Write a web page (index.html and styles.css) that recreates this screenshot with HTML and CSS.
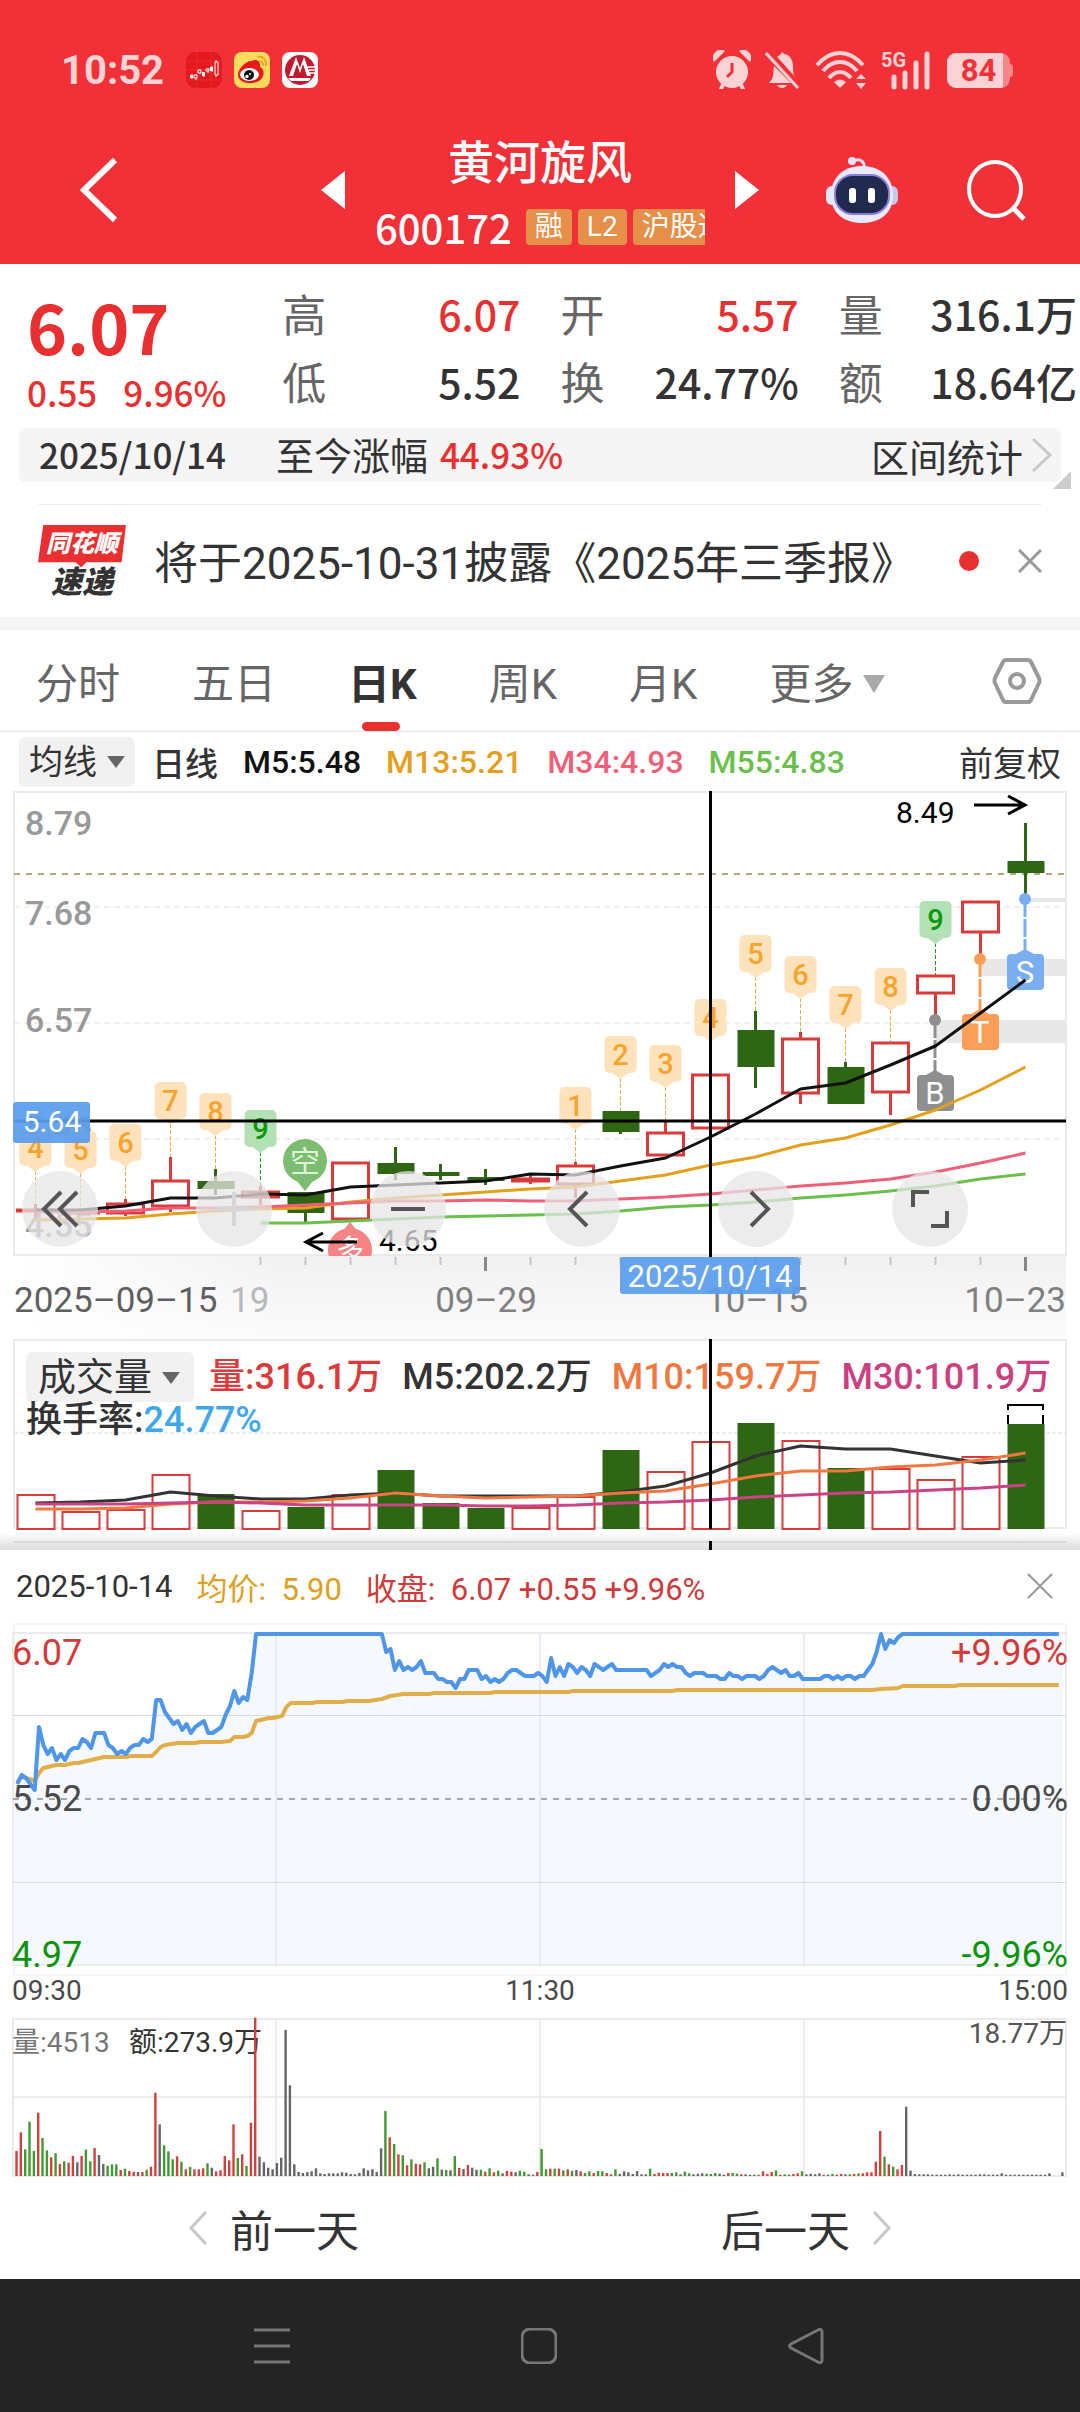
FILE: index.html
```html
<!DOCTYPE html>
<html lang="zh-CN">
<head>
  <meta charset="UTF-8">
  <meta name="viewport" content="width=device-width, initial-scale=1.0">
  <title>黄河旋风 600172</title>
  <link rel="stylesheet" href="styles.css">
</head>
<body>
  <header class="main-header">
    <div class="status-bar">
      <span class="clock">10:52</span>
      <span class="app-icons">
        <svg width="36" height="36" viewBox="0 0 36 36">
          <rect width="36" height="36" rx="9" fill="#e5191d"/>
          <path d="M11 0V36M25 0V36M0 9H36M0 18H36M0 28H36" stroke="#ea2c30" stroke-width="1"/>
          <path d="M6 22v5M10 22v6M14 17v5M18 20v5M22 16v5M26 14v6M30 8v17" stroke="#fff" stroke-width="1"/>
          <path d="M4 23h3v3H4zM16 20h3v4h-3zM24 15h3v4h-3z" fill="#fff"/>
          <path d="M8 23h3v3H8zM12 18h3v3h-3zM20 17h3v2h-3zM29 10h3v13h-3z" fill="#e5191d" stroke="#fff"/>
        </svg>
        <svg width="36" height="36" viewBox="0 0 36 36">
          <rect width="36" height="36" rx="8" fill="#fddb5c"/>
          <path d="M4 23c0-7 9-15 14-14 3-2 9-1 8 6 5 2 5 10-1 14-9 5-21 1-21-6z" fill="#e3191c"/>
          <ellipse cx="15.500" cy="22.500" rx="9.500" ry="6.500" fill="#fff"/>
          <circle cx="15" cy="23" r="5" fill="#111"/>
          <circle cx="13" cy="24.500" r="1.700" fill="#fff"/><circle cx="16" cy="22" r="1" fill="#fff"/>
          <path d="M24 5c5-1 9 3 8 9M25 9c3 0 4 2 4 5" fill="none" stroke="#f3a12c" stroke-width="2"/>
        </svg>
        <svg width="36" height="36" viewBox="0 0 36 36">
          <rect width="36" height="36" rx="8" fill="#fff"/>
          <circle cx="18" cy="18" r="15" fill="#c4182f"/>
          <path d="M7 24L14 5l4 11 4-11 7 19h-4l-4-12-3 9-3-9-4 12zM6 26h23l-2 3H9z" fill="#fff"/>
          <path d="M26 15h10M27 18h9M28 21h8" stroke="#fff" stroke-width="1.500"/>
        </svg>
      </span>
      <span class="system-icons">
        <svg width="38" height="40" viewBox="0 0 38 40">
          <circle cx="19" cy="22" r="16" fill="#fcd3d5"/>
          <path d="M1 12A8 8 0 0 1 12 1zM37 12A8 8 0 0 0 26 1zM8 34l-2 5h4l2-4zM30 34l2 5h-4l-2-4z" fill="#fcd3d5"/>
          <path d="M19 13v9l-5 5" fill="none" stroke="#f23038" stroke-width="3"/>
        </svg>
        <svg width="36" height="38" viewBox="0 0 36 38">
          <path d="M4 32c5-5 4-10 5-17L26 32zM12 6c2-2 3-2 4-3l1-2 2 2c7 1 9 7 9 13 0 7 1 9 4 13zM12 34h10c-2 4-8 4-10 0z" fill="#fcd3d5"/>
          <path d="M4 1L36 36" stroke="#f23038" stroke-width="5"/>
          <path d="M1 2L33 37" stroke="#fcd3d5" stroke-width="3"/>
        </svg>
        <svg width="52" height="40" viewBox="0 0 52 40">
          <g fill="none" stroke="#fcd3d5" stroke-width="4">
            <path d="M2 15C16-1 34-1 48 15M8 21C18 9 32 9 42 21M14 28C21 20 29 20 36 28"/>
          </g>
          <path d="M19 32q6-5 12 0l-6 6zM41 29l5-5 5 5zM41 33h10l-5 6z" fill="#fcd3d5"/>
        </svg>
        <span class="signal">
          <span class="net">5G</span>
          <svg width="50" height="40" viewBox="0 0 50 40">
            <path d="M13 37V27M24 37V23M35 37V13M46 37V4" stroke="#fcd3d5" stroke-width="5" stroke-linecap="round"/>
          </svg>
        </span>
        <span class="battery">84</span>
      </span>
    </div>
    <div class="title-bar">
      <button class="icon-btn back-btn" aria-label="返回">
        <svg width="38" height="66" viewBox="0 0 38 66"><path d="M35 3L4 33l31 30" fill="none" stroke="#fff" stroke-width="6"/></svg>
      </button>
      <div class="stock-switch">
        <button class="icon-btn" aria-label="上一只">
          <svg width="24" height="38" viewBox="0 0 24 38"><path d="M24 0v38L0 19z" fill="#fff"/></svg>
        </button>
        <div class="stock-name">
          <h1>黄河旋风</h1>
          <div class="stock-tags">
            <span class="stock-code">600172</span>
            <span class="tag">融</span>
            <span class="tag">L2</span>
            <span class="tag">沪股通</span>
          </div>
        </div>
        <button class="icon-btn" aria-label="下一只">
          <svg width="24" height="38" viewBox="0 0 24 38"><path d="M0 0v38l24-19z" fill="#fff"/></svg>
        </button>
      </div>
      <button class="icon-btn robot-btn" aria-label="智能助手">
        <svg width="72" height="68" viewBox="0 0 72 68">
          <path d="M27 5c8-4 12 2 11 7" fill="none" stroke="#e5e2f7" stroke-width="3"/>
          <circle cx="26" cy="5" r="4" fill="#e6e6fa"/>
          <rect x="0" y="30" width="12" height="19" rx="6" fill="#e4e6fa"/>
          <rect x="60" y="30" width="12" height="19" rx="6" fill="#c8c5ee"/>
          <path d="M36 10c22 0 31 15 31 29 0 19-14 28-31 28S5 58 5 39c0-14 9-29 31-29z" fill="#e9ebfc"/>
          <rect x="9" y="19" width="54" height="39" rx="18" fill="#202a4c" stroke="#8d7be0" stroke-width="2"/>
          <rect x="23" y="32" width="7" height="15" rx="3" fill="#fff"/>
          <rect x="42" y="32" width="7" height="15" rx="3" fill="#fff"/>
        </svg>
      </button>
      <button class="icon-btn" aria-label="搜索">
        <svg width="60" height="62" viewBox="0 0 60 62"><ellipse cx="29" cy="30" rx="26" ry="27" fill="none" stroke="#fff" stroke-width="4"/><path d="M46 48l12 12" stroke="#fff" stroke-width="5"/></svg>
      </button>
    </div>
  </header>

  <main>
    <section class="quote">
      <div class="price-block">
        <div class="price">6.07</div>
        <div class="change"><span>0.55</span><span>9.96%</span></div>
      </div>
      <dl>
        <div><dt>高</dt><dd class="up">6.07</dd></div>
        <div><dt>低</dt><dd>5.52</dd></div>
      </dl>
      <dl>
        <div><dt>开</dt><dd class="up">5.57</dd></div>
        <div><dt>换</dt><dd>24.77%</dd></div>
      </dl>
      <dl>
        <div><dt>量</dt><dd>316.1万</dd></div>
        <div><dt>额</dt><dd>18.64亿</dd></div>
      </dl>
    </section>

    <div class="range-bar">
      <span class="range-date">2025/10/14</span>
      <span class="range-label">至今涨幅</span>
      <span class="range-value up">44.93%</span>
      <a href="#" class="range-link">区间统计
        <svg width="22" height="36" viewBox="0 0 22 36"><path d="M2 2l17 16L2 34" fill="none" stroke="#c8c8c8" stroke-width="3"/></svg>
      </a>
    </div>

    <section class="news">
      <span class="news-logo">
        <span class="logo-top">同花顺</span>
        <span class="logo-bottom">速递</span>
      </span>
      <a href="#" class="news-text">将于2025-10-31披露《2025年三季报》</a>
      <span class="dot"></span>
      <button class="icon-btn" aria-label="关闭公告">
        <svg width="24" height="24" viewBox="0 0 24 24"><path d="M1 1l22 22M23 1L1 23" stroke="#999" stroke-width="3"/></svg>
      </button>
    </section>

    <nav class="tabs">
      <button>分时</button>
      <button>五日</button>
      <button class="active">日K</button>
      <button>周K</button>
      <button>月K</button>
      <button class="more">更多<i class="caret"></i></button>
      <button class="icon-btn settings" aria-label="设置">
        <svg width="50" height="46" viewBox="0 0 50 46"><path d="M14 2h22q2 0 3 2l8 16q1 3 0 5l-8 17q-1 2-3 2H14q-2 0-3-2L3 25q-1-2 0-5l8-16q1-2 3-2z" fill="none" stroke="#999" stroke-width="4"/><circle cx="25" cy="23" r="7" fill="none" stroke="#999" stroke-width="4"/></svg>
      </button>
    </nav>

    <div class="ma-row">
      <button class="pill">均线<i class="caret dark"></i></button>
      <span class="period">日线</span>
      <span class="ma5">M5:5.48</span>
      <span class="ma13">M13:5.21</span>
      <span class="ma34">M34:4.93</span>
      <span class="ma55">M55:4.83</span>
      <button class="adjust">前复权</button>
    </div>

    <section class="chart">
      <svg id="kChart" viewBox="0 791 1080 548"></svg>
      <div class="chart-tools">
        <button aria-label="最左"><svg width="38" height="38" viewBox="0 0 38 38"><path d="M20 2L3 19l17 17M36 2L19 19l17 17"/></svg></button>
        <button aria-label="放大" disabled><svg width="38" height="38" viewBox="0 0 38 38"><path d="M19 2v34M2 19h34"/></svg></button>
        <button aria-label="缩小"><svg width="38" height="38" viewBox="0 0 38 38"><path d="M2 19h34"/></svg></button>
        <button aria-label="左移"><svg width="38" height="38" viewBox="0 0 38 38"><path d="M24 2L7 19l17 17"/></svg></button>
        <button aria-label="右移"><svg width="38" height="38" viewBox="0 0 38 38"><path d="M14 2l17 17-17 17"/></svg></button>
        <button aria-label="全屏"><svg width="38" height="38" viewBox="0 0 38 38"><path d="M18 2H2v15M36 21v15H20"/></svg></button>
      </div>
    </section>

    <section class="chart volume">
      <svg id="volChart" viewBox="0 1339 1080 211"></svg>
      <div class="vol-legend">
        <div class="vol-row">
          <button class="pill">成交量<i class="caret dark"></i></button>
          <span class="vol">量:316.1万</span>
          <span>M5:202.2万</span>
          <span class="m10">M10:159.7万</span>
          <span class="m30">M30:101.9万</span>
        </div>
        <div class="turnover">换手率:<span>24.77%</span></div>
      </div>
    </section>

    <section class="day-panel">
      <div class="panel-head">
        <span>2025-10-14</span>
        <span class="avg">均价:&nbsp; 5.90</span>
        <span class="close-price">收盘:&nbsp; 6.07 +0.55 +9.96%</span>
        <button class="icon-btn" aria-label="关闭">
          <svg width="28" height="28" viewBox="0 0 28 28"><path d="M2 2l24 24M26 2L2 26" stroke="#999" stroke-width="2"/></svg>
        </button>
      </div>
      <svg id="minuteChart" viewBox="0 1622 1080 390"></svg>
      <svg id="minuteVol" viewBox="0 2012 1080 168"></svg>
      <div class="day-nav">
        <button><svg width="20" height="36" viewBox="0 0 20 36"><path d="M18 2L3 18l15 16" fill="none" stroke="#c8c8c8" stroke-width="3"/></svg>前一天</button>
        <button>后一天<svg width="20" height="36" viewBox="0 0 20 36"><path d="M2 2l15 16L2 34" fill="none" stroke="#c8c8c8" stroke-width="3"/></svg></button>
      </div>
    </section>
  </main>

  <footer class="system-nav">
    <button class="icon-btn" aria-label="任务"><svg width="36" height="36" viewBox="0 0 36 36"><path d="M0 2h36M0 18h36M0 34h36"/></svg></button>
    <button class="icon-btn" aria-label="主页"><svg width="36" height="36" viewBox="0 0 36 36"><rect x="1" y="1" width="34" height="34" rx="8"/></svg></button>
    <button class="icon-btn" aria-label="返回"><svg width="36" height="36" viewBox="0 0 36 36"><path d="M30 2Q34 0 34 4V32Q34 36 30 34L3 20Q0 18 3 16z"/></svg></button>
  </footer>

  <script src="charts.js"></script>
</body>
</html>
```
FILE: styles.css
```css
/* ===== Base Styles ===== */
:root {
  --red: #e93030;
  --header: #f23038;
  --text: #333333;
  --muted: #666666;
  --light: #f5f5f5;
  --sans: Roboto, "Noto Sans CJK SC", sans-serif;
  --digits: "Noto Sans CJK SC", Roboto, sans-serif;
}

* {
  margin: 0;
  padding: 0;
  box-sizing: border-box;
}

body {
  background: #fff;
  color: var(--text);
  font-family: var(--sans);
  overflow-x: hidden;
}

button {
  border: none;
  background: none;
  color: inherit;
  font: inherit;
  cursor: pointer;
}

a {
  color: inherit;
  text-decoration: none;
}

svg {
  display: block;
}

.icon-btn {
  display: flex;
}

.up {
  color: var(--red);
}

.caret {
  display: inline-block;
  border: 11px solid transparent;
  border-top: 18px solid #aaa;
  border-bottom: none;
}

.caret.dark {
  border-width: 12px 9px 0;
  border-top-color: #666;
}

/* ===== Header ===== */
.main-header {
  background: var(--header);
  color: #fff;
  height: 264px;
}

.status-bar {
  display: flex;
  align-items: center;
  height: 140px;
  padding: 0 70px 0 61px;
  color: #fcd3d5;
}

.clock {
  font-size: 40px;
  font-weight: 700;
}

.app-icons {
  display: flex;
  gap: 12px;
  margin-left: 22px;
}

.system-icons {
  display: flex;
  align-items: center;
  gap: 14px;
  margin-left: auto;
}

.signal {
  position: relative;
  margin-right: 2px;
}

.net {
  position: absolute;
  top: 0;
  left: 0;
  font-size: 20px;
  font-weight: 700;
  line-height: 20px;
}

.battery {
  position: relative;
  width: 63px;
  border-radius: 9px;
  background: linear-gradient(to right, #fcd3d5 56px, #f7868b 56px);
  color: var(--header);
  font-size: 31px;
  font-weight: 700;
  line-height: 35px;
  text-align: center;
}

.battery::after {
  content: "";
  position: absolute;
  top: 11px;
  right: -3px;
  width: 3px;
  height: 13px;
  border-radius: 0 3px 3px 0;
  background: #f7868b;
}

.title-bar {
  display: flex;
  align-items: center;
  padding: 0 54px 0 80px;
  height: 100px;
}

.stock-switch {
  display: flex;
  align-items: center;
  margin-left: 203px;
  gap: 30px;
}

.stock-name {
  width: 330px;
}

.stock-name h1 {
  margin-bottom: 18px;
  font-size: 46px;
  font-weight: 500;
  line-height: 56px;
  text-align: center;
}

.stock-tags {
  display: flex;
  align-items: center;
  gap: 6px;
  overflow: hidden;
  line-height: 36px;
}

.stock-code {
  font-family: var(--digits);
  font-size: 40px;
  font-weight: 500;
  margin-right: 8px;
}

.tag {
  flex: none;
  padding: 0 9px;
  border-radius: 4px;
  background: #e58f48;
  font-size: 28px;
}

.robot-btn {
  margin-left: auto;
  margin-right: 68px;
}

/* ===== Quote ===== */
.quote {
  display: grid;
  grid-template-columns: 215fr 238fr 238fr 238fr;
  gap: 40px;
  padding: 15px 3px 13px 27px;
  font-family: var(--digits);
}

.price {
  color: var(--red);
  font-size: 68px;
  font-weight: 700;
  line-height: 94px;
}

.change {
  display: flex;
  gap: 26px;
  color: var(--red);
  font-size: 35px;
  font-weight: 500;
  line-height: 38px;
}

.quote dl div {
  display: flex;
  justify-content: space-between;
  line-height: 68px;
}

.quote dt {
  color: var(--muted);
  font-size: 44px;
}

.quote dd {
  font-size: 41px;
  font-weight: 500;
  white-space: nowrap;
}

/* ===== Range bar ===== */
.range-bar {
  position: relative;
  display: flex;
  align-items: center;
  margin: 0 19px;
  padding: 0 8px 0 20px;
  height: 54px;
  border-radius: 6px;
  background: var(--light);
  font-size: 38px;
}

.range-bar::after {
  content: "";
  position: absolute;
  right: -10px;
  bottom: -7px;
  border-left: 18px solid transparent;
  border-bottom: 18px solid #ccc;
}

.range-date,
.range-value {
  padding-bottom: 4px;
  font-family: var(--digits);
  font-size: 35px;
  font-weight: 500;
}

.range-label {
  margin: 0 12px 0 50px;
  padding-bottom: 4px;
}

.range-link {
  display: flex;
  align-items: center;
  gap: 8px;
  margin-left: auto;
}

/* ===== News ===== */
.news {
  display: flex;
  align-items: center;
  margin: 22px 38px 0;
  height: 113px;
  border-top: 1px solid #eee;
}

.news-logo {
  display: flex;
  flex-direction: column;
  align-items: center;
  width: 88px;
  margin-right: 28px;
  font-style: italic;
  font-weight: 900;
}

.logo-top {
  width: 88px;
  padding-bottom: 5px;
  background: var(--red);
  clip-path: polygon(6% 0, 100% 0, 95% 88%, 55% 88%, 49% 100%, 43% 88%, 0 88%);
  color: #fff;
  font-size: 24px;
  line-height: 38px;
  text-align: center;
}

.logo-bottom {
  font-size: 31px;
  line-height: 30px;
}

.news-text {
  padding-bottom: 3px;
  font-size: 44px;
  white-space: nowrap;
}

.dot {
  width: 20px;
  height: 20px;
  margin: 0 39px 0 auto;
  border-radius: 50%;
  background: var(--red);
}

/* ===== Tabs ===== */
.tabs {
  display: flex;
  align-items: center;
  gap: 72px;
  height: 115px;
  padding: 0 38px 0 36px;
  border-top: 13px solid #f4f4f4;
  border-bottom: 1px solid #e6e6e6;
  color: var(--muted);
  font-size: 42px;
}

.tabs button {
  height: 100%;
  align-items: center;
}

.tabs .active {
  position: relative;
  color: var(--text);
  font-weight: 700;
}

.tabs .active::after {
  content: "";
  position: absolute;
  left: 14px;
  bottom: 0;
  width: 38px;
  height: 9px;
  border-radius: 5px;
  background: var(--red);
}

.more .caret {
  margin-left: 10px;
  vertical-align: 6px;
}

.tabs .settings {
  margin-left: auto;
}

/* ===== Moving averages ===== */
.ma-row {
  display: flex;
  align-items: center;
  gap: 25px;
  height: 59px;
  padding: 0 19px;
  font-size: 32px;
  font-weight: 500;
  white-space: nowrap;
}

.pill {
  padding: 0 10px;
  border-radius: 6px;
  background: #f1f1f1;
  font-weight: 400;
  line-height: 50px;
}

.pill .caret {
  margin-left: 10px;
  vertical-align: 6px;
}

.ma-row .pill {
  margin-right: -8px;
  font-size: 34px;
}

.period {
  font-size: 33px;
}

.ma5 {
  color: #111;
}

.ma13 {
  color: #e2a01c;
}

.ma34 {
  color: #ef6078;
}

.ma55 {
  color: #6bbf4c;
}

.adjust {
  margin-left: auto;
  font-size: 34px;
  font-weight: 400;
}

/* ===== Charts ===== */
.chart {
  position: relative;
}

.chart svg text,
.day-panel svg text {
  font-family: var(--sans);
}

.chart > svg,
.day-panel > svg {
  width: 100%;
  height: auto;
}

.chart-tools {
  position: absolute;
  top: 380px;
  left: 22px;
  display: flex;
  gap: 98px;
}

.chart-tools button {
  display: flex;
  align-items: center;
  justify-content: center;
  width: 76px;
  height: 76px;
  border-radius: 50%;
  background: rgba(230, 230, 230, 0.75);
}

.chart-tools path {
  fill: none;
  stroke: #555;
  stroke-width: 4;
}

.chart-tools button:disabled path {
  stroke: #d6d6d6;
}

.vol-legend {
  position: absolute;
  top: 13px;
  left: 26px;
  right: 14px;
  font-size: 36px;
  font-weight: 500;
  white-space: nowrap;
}

.vol-row {
  display: flex;
  gap: 20px;
  line-height: 50px;
}

.vol-legend .pill {
  padding: 0 14px 0 12px;
  margin-right: -5px;
  font-size: 38px;
}

.vol {
  color: #dc3a3a;
}

.m10 {
  color: #f07840;
}

.m30 {
  color: #cc4080;
}

.turnover {
  line-height: 36px;
}

.turnover span {
  color: #40a8ea;
}

/* ===== Day panel ===== */
.panel-head {
  display: flex;
  align-items: center;
  gap: 24px;
  height: 72px;
  padding: 0 26px 0 16px;
  font-size: 31px;
  white-space: nowrap;
}

.avg {
  color: #dda020;
}

.close-price {
  color: #d03a3a;
}

.panel-head .icon-btn {
  margin-left: auto;
}

.day-nav {
  display: flex;
  justify-content: space-between;
  height: 99px;
  padding: 0 188px 3px;
  font-size: 43px;
}

.day-nav button {
  display: flex;
  align-items: center;
  gap: 22px;
}

/* ===== System navigation ===== */
.system-nav {
  display: flex;
  justify-content: space-between;
  align-items: center;
  height: 133px;
  padding: 0 256px 0 254px;
  background: #242424;
}

.system-nav svg {
  fill: none;
  stroke: #777;
  stroke-width: 3;
}
```
FILE: charts.js
```js
const RED = "#d93a3a";
const GREEN = "#2f6614";
const x = i => 35.5 + 45 * i;

// [body top, body bottom, wick top, wick bottom, rising]
const candles = [
  [1209, 1211, 1204, 1217, 1], [1210, 1214, 1208, 1215, 1], [1203, 1214, 1199, 1216, 1],
  [1180, 1207, 1157, 1212, 1], [1181, 1189, 1169, 1195, 0], [1191, 1198, 1186, 1205, 1],
  [1192, 1213, 1192, 1222, 0], [1162, 1220, 1162, 1220, 1], [1163, 1174, 1147, 1180, 0],
  [1172, 1176, 1164, 1180, 0], [1177, 1181, 1169, 1185, 0], [1178, 1182, 1173, 1184, 1],
  [1165, 1185, 1162, 1198, 1], [1111, 1132, 1111, 1134, 0], [1132, 1156, 1122, 1156, 1],
  [1074, 1129, 1074, 1129, 1], [1030, 1067, 1011, 1088, 0], [1038, 1094, 1032, 1104, 1],
  [1067, 1104, 1062, 1104, 0], [1042, 1093, 1042, 1115, 1], [975, 994, 975, 1020, 1],
  [901, 933, 901, 959, 1], [861, 873, 823, 897, 0]
];

// moving averages: [colour, first index, points]
const averages = [
  ["#6bbf4c", 5, [1223, 1223, 1221, 1219, 1217, 1216, 1215, 1214, 1211, 1207, 1205, 1202, 1198, 1195, 1191, 1186, 1179, 1174]],
  ["#e2a01c", 0, [1220, 1219, 1218, 1214, 1211, 1209, 1208, 1202, 1198, 1195, 1192, 1189, 1187, 1181, 1175, 1165, 1157, 1145, 1138, 1125, 1110, 1090, 1067]],
  ["#ef6078", 0, [1212, 1212, 1211, 1208, 1208, 1207, 1205, 1203, 1201, 1201, 1200, 1201, 1201, 1199, 1197, 1194, 1190, 1186, 1183, 1179, 1172, 1163, 1153]],
  ["#111", 0, [1210, 1210, 1206, 1198, 1198, 1194, 1195, 1187, 1185, 1183, 1181, 1174, 1175, 1166, 1158, 1137, 1114, 1089, 1083, 1065, 1046, 1013, 980]]
];

// nine-turn badges: [index, digit, top]
const badges = [
  [0, 4, 1129], [1, 5, 1131], [2, 6, 1124], [3, 7, 1082], [4, 8, 1093], [5, 9, 1110],
  [12, 1, 1087], [13, 2, 1036], [14, 3, 1045], [15, 4, 999], [16, 5, 935], [17, 6, 956],
  [18, 7, 986], [19, 8, 968], [20, 9, 901]
];

function line(x1, y1, x2, y2, color, width, dash) {
  return `<path d="M${x1} ${y1}L${x2} ${y2}" stroke="${color}" stroke-width="${width || 2}"${dash ? ` stroke-dasharray="${dash}"` : ""}/>`;
}

function poly(points, color, width) {
  return `<polyline points="${points.join(" ")}" fill="none" stroke="${color}" stroke-width="${width}" stroke-linejoin="round"/>`;
}

function text(tx, ty, str, size, color, extra) {
  return `<text x="${tx}" y="${ty}" font-size="${size}" fill="${color}" ${extra || ""}>${str}</text>`;
}

function box(bx, by, w, h, fill, extra) {
  return `<rect x="${bx}" y="${by}" width="${w}" height="${h}" fill="${fill}" ${extra || ""}/>`;
}

function drawK() {
  let s = `<defs>
    <linearGradient id="axisBg" x1="0" y1="0" x2="0" y2="1"><stop offset="0" stop-color="#f1f1f1"/><stop offset="1" stop-color="#fbfbfb"/></linearGradient>
    <linearGradient id="axisFade"><stop offset="0" stop-color="#fff"/><stop offset="1" stop-color="#fff" stop-opacity="0"/></linearGradient>
    <clipPath id="kClip"><rect x="14" y="792" width="1052" height="464"/></clipPath></defs>`;
  s += box(14, 1256, 1052, 83, "url(#axisBg)") + box(14, 1256, 280, 83, "url(#axisFade)");
  s += box(14, 792, 1052, 463, "#fff", 'stroke="#eaeaea" stroke-width="2"');
  [907, 1023, 1139].forEach(y => { s += line(14, y, 1066, y, "#e2e2e2", 1, "6 4"); });
  s += line(14, 874, 1066, 874, "#b9a67c", 2, "6 6");
  [["8.79", 835], ["7.68", 925], ["6.57", 1032], ["5.46", 1140], ["4.55", 1237]].forEach(l => {
    s += text(25, l[1], l[0], 34, "#999", 'font-weight="500"');
  });
  s += box(935, 1020, 131, 23, "#e8e8e8") + box(980, 959, 86, 17, "#e8e8e8") + box(1025, 898, 41, 4, "#e8e8e8");

  badges.forEach(([i, n, top]) => {
    const cx = x(i), green = n === 9;
    const c = green ? "#b3e0b4" : "#fee2bb";
    s += line(cx, top + 42, cx, candles[i][2], green ? "#1a9a1a" : "#d8b04c", 1, "4 2");
    s += box(cx - 16, top, 32, 37, c, 'rx="5"') + `<path d="M${cx - 8} ${top + 37}h16l-8 6z" fill="${c}"/>`;
    s += text(cx, top + 29, n, 29, green ? "#0b980b" : "#f8a42c", 'text-anchor="middle" font-weight="500"');
  });

  candles.forEach(([a, b, hi, lo, rise], i) => {
    const cx = x(i), c = rise ? RED : GREEN;
    s += line(cx, hi, cx, lo, c, 3);
    s += rise ? box(cx - 18, a + 1, 36, Math.max(b - a - 2, 1), "#fff", `stroke="${RED}" stroke-width="3"`)
      : box(cx - 18, a, 37, b - a, GREEN);
  });

  // long / short balloons
  s += `<path d="M305 1191l-8-10h16z" fill="#7dbd71"/><circle cx="305" cy="1161" r="22" fill="#7dbd71"/>`;
  s += text(305, 1172, "空", 30, "#dff2da", 'text-anchor="middle"');
  s += `<g clip-path="url(#kClip)"><path d="M350 1222l-8 10h16z" fill="#f68484"/><circle cx="350" cy="1250" r="22" fill="#f68484"/>`;
  s += text(350, 1260, "多", 28, "#fff", 'text-anchor="middle"') + "</g>";

  // trade marks
  [["B", 935, 1020, 1075, "#8f8f8f"], ["T", 980, 959, 1014, "#fb9f58"], ["S", 1025, 899, 954, "#79aef0"]].forEach(([t, cx, dot, top, c]) => {
    s += `<circle cx="${cx}" cy="${dot}" r="6" fill="${c}"/>` + line(cx, dot, cx, top, c, 3, "18 2");
    s += `<path d="M${cx - 9} ${top}l9-5 9 5z" fill="${c}"/>` + box(cx - 18, top, 37, 36, c, 'rx="4"');
    s += text(cx, top + 29, t, 31, "#fff", 'text-anchor="middle"');
  });

  averages.forEach(([c, first, pts]) => {
    s += poly(pts.map((y, i) => `${x(first + i)},${y}`), c, 3);
  });

  s += text(896, 823, "8.49", 30, "#000") + `<path d="M974 805h50M1008 796l17 9-17 9" fill="none" stroke="#000" stroke-width="3"/>`;
  s += text(379, 1251, "4.65", 30, "#000") + `<path d="M357 1242h-50M323 1233l-17 9 17 9" fill="none" stroke="#000" stroke-width="3"/>`;

  // time axis
  for (let i = 5; i < 22; i++) s += line(x(i), 1257, x(i), 1265, "#c4c4c4", 2);
  [10, 16, 22].forEach(i => { s += line(x(i), 1257, x(i), 1271, "#888", 3); });
  s += text(14, 1312, "2025–09–15", 35, "#5f5f5f") + text(230, 1312, "19", 35, "#b8b8b8");
  s += text(486, 1312, "09–29", 35, "#808080", 'text-anchor="middle"');
  s += text(757, 1312, "10–15", 35, "#808080", 'text-anchor="middle"');
  s += text(1066, 1312, "10–23", 35, "#808080", 'text-anchor="end"');

  // crosshair
  s += line(14, 1121, 1066, 1121, "#000", 3) + line(710.5, 791, 710.5, 1257, "#000", 3);
  s += box(13, 1102, 77, 41, "#5a9ded", 'rx="3" fill-opacity="0.93"') + text(52, 1132, "5.64", 30, "#fff", 'text-anchor="middle"');
  s += box(620, 1257, 180, 37, "#5a9ded", 'rx="3" fill-opacity="0.93"') + text(710, 1287, "2025/10/14", 31, "#fff", 'text-anchor="middle"');
  document.getElementById("kChart").innerHTML = s;
}

// volume bar tops and averages
const volTops = [1494, 1511, 1509, 1474, 1494, 1510, 1507, 1494, 1470, 1503, 1508, 1507, 1496, 1450, 1471, 1441, 1423, 1440, 1468, 1468, 1479, 1456, 1424];
const volLines = [
  ["#333", [1503, 1502, 1500, 1492, 1496, 1499, 1499, 1495, 1493, 1496, 1496, 1496, 1496, 1492, 1486, 1473, 1456, 1446, 1449, 1449, 1456, 1463, 1460]],
  ["#f07840", [1509, 1509, 1508, 1504, 1502, 1502, 1501, 1498, 1493, 1496, 1498, 1497, 1496, 1493, 1491, 1484, 1476, 1471, 1471, 1467, 1465, 1460, 1453]],
  ["#c94482", [1504, 1504, 1504, 1503, 1502, 1503, 1505, 1505, 1505, 1505, 1506, 1506, 1505, 1503, 1502, 1500, 1497, 1495, 1493, 1492, 1490, 1488, 1485]]
];

function drawVolume() {
  let s = `<defs><linearGradient id="shade" x1="0" y1="0" x2="0" y2="1"><stop offset="0" stop-color="#fff"/><stop offset="1" stop-color="#dcdcdc"/></linearGradient></defs>`;
  s += box(0, 1533, 1080, 17, "url(#shade)") + line(14, 1542, 1066, 1542, "#d8d8d8");
  s += box(14, 1340, 1052, 188, "#fff", 'stroke="#eaeaea" stroke-width="2"');
  s += line(14, 1433, 1066, 1433, "#ddd", 1, "4 2");
  volTops.forEach((top, i) => {
    s += candles[i][4] ? box(x(i) - 18, top + 1, 37, 1528 - top, "#fff", `stroke="${RED}" stroke-width="2"`)
      : box(x(i) - 18, top, 37, 1529 - top, GREEN);
  });
  volLines.forEach(([c, pts]) => { s += poly(pts.map((y, i) => `${x(i)},${y}`), c, 3); });
  s += `<path d="M1008 1410v-5h35v5M1008 1415v9M1043 1415v9" fill="none" stroke="#000" stroke-width="2"/>`;
  s += line(710.5, 1339, 710.5, 1529, "#000", 3) + line(710.5, 1541, 710.5, 1550, "#000", 3);
  document.getElementById("volChart").innerHTML = s;
}

// minute prices in cents above the previous close, "value*repeat"
const minutes = `5 8 7 5 3 24 18 15 17 13 15 13 16 17 17 20 19 17 22*3 18 17 15 16 15 17 18 18 20 19 20 33 33 29 27 25 26 23 25
22 24 25 26 22 22 23 24 28 31 36 32 34 33 42 55*30 49 50 43 46 43 44 43 44 46 42*3 40 40 39 39 37 40 40 43*3 40 41 39 40 39 40 42
43 43 42 41*3 42 41 39 47 41 44 41 45 44 42 44 43 41 45 44 43 44 45 43*8 41 42 43 45 44 45 44 44 42 41 42*3 41*3 40 40 42 41 41
40 41*3 40 41 43 44 43 42 43 41 41 42 40*5 41 41 40 41 40 41 41 40 41 41 43 45 49 55 50 53 52 54 55*37`;

// average price: [minute, y]
const avgPoints = [
  [0, 1782], [1, 1777], [2, 1778], [4, 1781], [5, 1773], [6, 1768], [9, 1765], [11, 1765], [13, 1763], [14, 1763], [20, 1757], [25, 1757],
  [26, 1756], [31, 1756], [32, 1752], [33, 1747], [34, 1745], [37, 1743], [41, 1743], [42, 1742], [47, 1742], [49, 1741], [50, 1737],
  [52, 1737], [53, 1736], [54, 1733], [55, 1721], [58, 1718], [59, 1718], [61, 1716], [62, 1707], [63, 1703], [64, 1703], [68, 1703],
  [69, 1702], [75, 1702], [76, 1701], [81, 1701], [84, 1699], [86, 1696], [89, 1694], [95, 1694], [96, 1693], [109, 1693], [110, 1692],
  [127, 1692], [128, 1691], [151, 1691], [152, 1690], [197, 1690], [199, 1689], [203, 1688], [204, 1686], [216, 1686], [217, 1685], [240, 1685]
];

function expand(str) {
  return str.trim().split(/\s+/).flatMap(t => {
    const [v, n] = t.split("*");
    return Array(Number(n || 1)).fill(v);
  });
}

const mx = i => 17.3 + i * 4.34;

function drawMinutes() {
  const pts = expand(minutes).map((p, i) => `${mx(i).toFixed(1)},${1799 - p * 3}`);
  let s = box(14, 1624, 1052, 351, "#fff", 'stroke="#f5f5f5" stroke-width="2"');
  s += `<polygon points="14,1965 14,1790 ${pts.join(" ")} 1063,1634 1063,1965" fill="#f5f9fe"/>`;
  s += box(13, 1633, 1053, 332, "none", 'stroke="#eaecef" stroke-width="2"');
  [276, 540, 804].forEach(v => { s += line(v, 1633, v, 1965, "#e8ebf0", 2); });
  s += line(13, 1715.5, 1066, 1715.5, "#d8dbe0", 1) + line(13, 1882.5, 1066, 1882.5, "#d8dbe0", 1);
  s += line(13, 1799, 1066, 1799, "#a5a8ad", 2, "6 6");
  s += poly(avgPoints.map(([m, y]) => `${mx(m).toFixed(1)},${y}`), "#e2ae4a", 4) + poly(pts, "#5096e8", 4);
  const end = 'text-anchor="end"';
  s += text(12, 1665, "6.07", 36, "#d33a3a") + text(12, 1811, "5.52", 36, "#4a4a4a") + text(12, 1967, "4.97", 36, "#0b930b");
  s += text(1068, 1665, "+9.96%", 36, "#d33a3a", end) + text(1068, 1811, "0.00%", 36, "#4a4a4a", end) + text(1068, 1967, "-9.96%", 36, "#0b930b", end);
  s += text(12, 2000, "09:30", 28, "#4a4a4a") + text(540, 2000, "11:30", 28, "#4a4a4a", 'text-anchor="middle"') + text(1068, 2000, "15:00", 28, "#4a4a4a", end);
  document.getElementById("minuteChart").innerHTML = s;
}

// minute volume, r = up, g = down, k = flat
const minuteVols = `75r 131r 80g 163g 75g 190r 114g 77g 56r 68g 36r 44g 40r 60r 41k 60r 79g 44g 84r 63k 36k 31g 35g 35g 18r 22g 15r 12r
12k 12r 19g 28r 250r 155k 92g 74g 50g 59r 43g 20r 27g 20r 20r 23r 38g 25k 14r 17r 60r 47r 155r 54g 65r 30g 160r 475r 58k 41k 25k 20k
39k 55k 438k 272k 35k 12k 9k 12k 14k 23k 8k 6k 8k 8k 8k 11k 10k 6k 5k 9k 23k 17k 20k 12k 83k 195g 116r 96g 65r 62g 32r 50g 37r 35r 41g
23k 28k 53g 19k 18g 17k 60g 24r 21k 33r 25k 19k 19g 13r 23g 11r 16g 8k 15r 13r 11k 16g 13g 5k 4k 12r 81g 20g 22r 22g 22r 17g 20r 16g
18k 14r 9g 14g 9r 15g 14g 9r 5r 20g 6k 14k 11k 6k 15k 5k 5k 22g 6r 10r 9r 9r 9g 11g 5k 13g 8g 5k 7k 8k 7g 6k 9g 7k 4k 9r 9g 7g 5r 5k
4k 4k 4g 14r 6r 12r 17g 4r 5g 4k 6r 8r 14g 5k 7k 5k 8k 4r 4k 6g 4r 6r 5k 5g 6r 8g 8r 11r 11r 43r 135r 58g 35r 28g 20r 33r 208k 16k
6k 5k 5k 5k 4k*4 5k 4k 5k 4k*4 5k 5k 4k*3 8k 4k*10 8k 0k*2 11k`;

function drawMinuteVol() {
  const colors = { r: "#d0413f", g: "#3f9a32", k: "#666" };
  let s = box(13, 2019, 1053, 157, "none", 'stroke="#eaeaea" stroke-width="2"') + line(13, 2097, 1066, 2097, "#dcdcdc", 1);
  [276, 540, 804].forEach(v => { s += line(v, 2019, v, 2176, "#ececec", 2); });
  s += text(12, 2052, "量:4513", 28, "#777") + text(129, 2052, "额:273.9万", 28, "#333") + text(1067, 2043, "18.77万", 28, "#555", 'text-anchor="end"');
  expand(minuteVols).forEach((t, i) => {
    const h = parseInt(t) / 3;
    s += box((mx(i) - 2).toFixed(1), (2176 - h).toFixed(1), 2.4, h.toFixed(1), colors[t.slice(-1)]);
  });
  document.getElementById("minuteVol").innerHTML = s;
}

drawK();
drawVolume();
drawMinutes();
drawMinuteVol();
```
